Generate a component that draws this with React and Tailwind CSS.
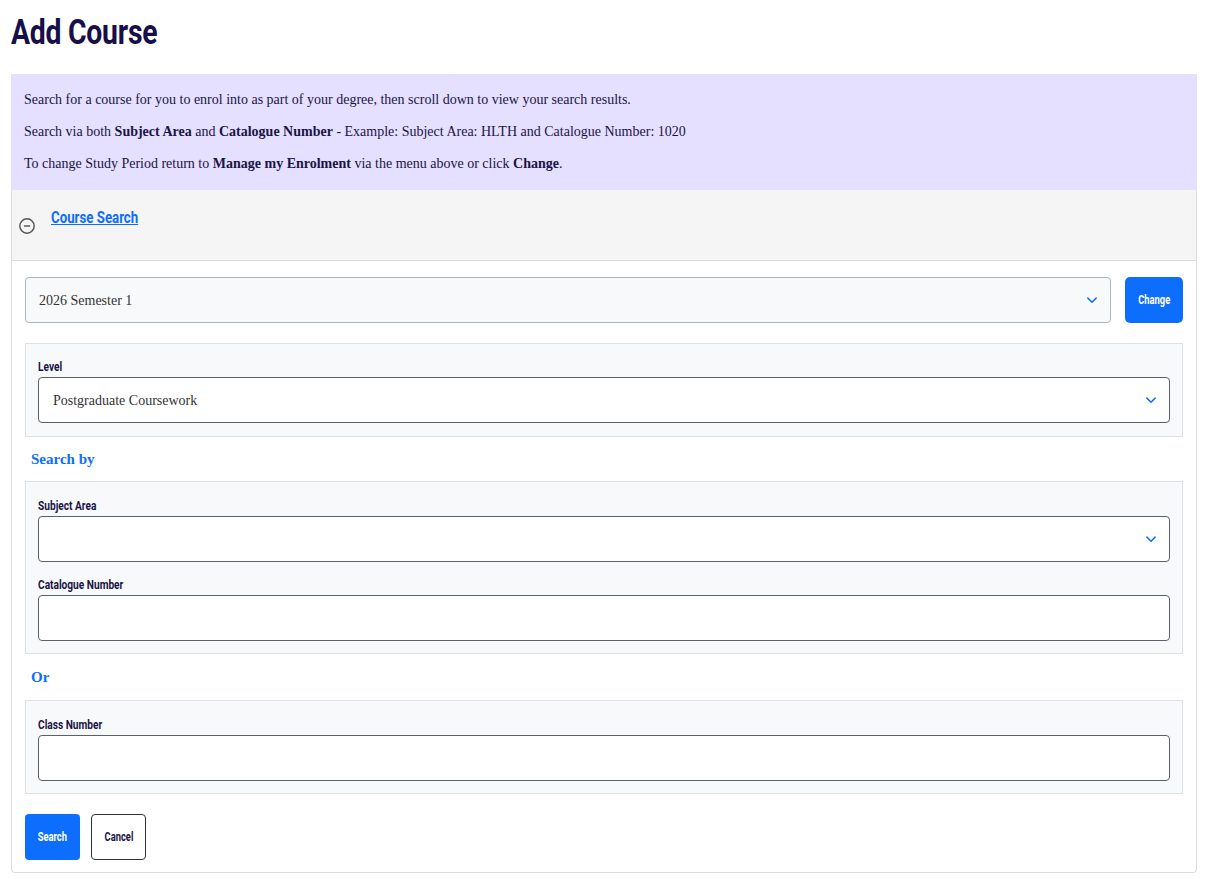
import React from "react";

function Chevron() {
  return (
    <svg width="12" height="12" viewBox="0 0 16 16" className="text-[#0d6efd]">
      <path d="M2.5 5.5l5.5 5.5 5.5-5.5" fill="none" stroke="currentColor" strokeWidth="2" strokeLinecap="round" strokeLinejoin="round" />
    </svg>
  );
}

function Label({ children }) {
  return (
    <div className="h-[12px] mb-[5px] leading-[12px]">
      <span className="inline-block origin-left scale-x-[0.78] font-['Roboto',sans-serif] text-[13px] font-bold text-[#1a1446]">
        {children}
      </span>
    </div>
  );
}

export default function App() {
  return (
    <div className="bg-white min-h-[879px] pl-[11px] pr-[10px] pt-[13px] pb-[6px] font-['Liberation_Serif',serif] text-[#1a1446]">
      <h1 className="h-[40px] leading-[40px]">
        <span className="inline-block origin-left scale-x-[0.81] font-['Roboto',sans-serif] text-[35px] font-bold text-[#160f4a] tracking-[-0.3px]">
          Add Course
        </span>
      </h1>
      <div className="mt-[21px] bg-[#e5e0ff] px-[13px] pt-[17px] pb-[17px] text-[14px] leading-[18px]">
        <p>Search for a course for you to enrol into as part of your degree, then scroll down to view your search results.</p>
        <p className="mt-[14px]">
          Search via both <b>Subject Area</b> and <b>Catalogue Number</b> - Example: Subject Area: HLTH and Catalogue Number: 1020
        </p>
        <p className="mt-[14px]">
          To change Study Period return to <b>Manage my Enrolment</b> via the menu above or click <b>Change</b>.
        </p>
      </div>
      <div className="border border-[#dddddd] border-t-0 rounded-b-[4px]">
        <div className="bg-[#f5f5f5] border-b border-[#dddddd] h-[71px] flex items-start pl-[6px]">
          <svg width="18" height="18" viewBox="0 0 20 20" className="mt-[27px] text-[#555]">
            <circle cx="10" cy="10" r="8" fill="none" stroke="currentColor" strokeWidth="1.6" />
            <path d="M6.5 10h7" stroke="currentColor" strokeWidth="1.6" />
          </svg>
          <a href="#" className="ml-[15px] mt-[17px] text-[#0d6efd] underline leading-[20px]">
            <span className="inline-block origin-left scale-x-[0.78] font-['Roboto',sans-serif] text-[17px] font-bold underline">
              Course Search
            </span>
          </a>
        </div>
        <div className="px-[13px] pt-[16px] pb-[12px]">
          <div className="flex gap-[14px]">
            <div className="flex-1 h-[46px] bg-[#f8f9fa] border border-[#adb5bd] rounded-[4px] flex items-center justify-between pl-[13px] pr-[12px] text-[14px] text-[#333]">
              <span>2026 Semester 1</span>
              <Chevron />
            </div>
            <button className="w-[58px] h-[46px] bg-[#0d6efd] rounded-[5px] flex items-center justify-center">
              <span className="inline-block scale-x-[0.72] font-['Roboto',sans-serif] text-[13px] font-bold text-white">Change</span>
            </button>
          </div>
          <div className="mt-[20px] bg-[#f8f9fa] border border-[#dee2e6] px-[12px] pt-[16px] pb-[13px]">
            <Label>Level</Label>
            <div className="h-[46px] bg-white border border-[#5a6169] rounded-[4px] flex items-center justify-between pl-[14px] pr-[12px] text-[14px] text-[#333]">
              <span>Postgraduate Coursework</span>
              <Chevron />
            </div>
          </div>
          <div className="mt-[13px] ml-[6px] text-[#0d6efd] font-bold text-[15px] leading-[18px]">Search by</div>
          <div className="mt-[13px] bg-[#f8f9fa] border border-[#dee2e6] px-[12px] pt-[17px] pb-[12px]">
            <Label>Subject Area</Label>
            <div className="h-[46px] bg-white border border-[#5a6169] rounded-[4px] flex items-center justify-end pr-[12px]">
              <Chevron />
            </div>
            <div className="mt-[16px]">
              <Label>Catalogue Number</Label>
            </div>
            <div className="h-[46px] bg-white border border-[#5a6169] rounded-[4px]" />
          </div>
          <div className="mt-[14px] ml-[6px] text-[#0d6efd] font-bold text-[15px] leading-[18px]">Or</div>
          <div className="mt-[14px] bg-[#f8f9fa] border border-[#dee2e6] px-[12px] pt-[17px] pb-[12px]">
            <Label>Class Number</Label>
            <div className="h-[46px] bg-white border border-[#5a6169] rounded-[4px]" />
          </div>
          <div className="mt-[20px] flex gap-[11px]">
            <button className="w-[55px] h-[46px] bg-[#0d6efd] rounded-[4px] flex items-center justify-center">
              <span className="inline-block scale-x-[0.72] font-['Roboto',sans-serif] text-[13px] font-bold text-white">Search</span>
            </button>
            <button className="w-[55px] h-[46px] bg-white border border-[#333] rounded-[4px] flex items-center justify-center">
              <span className="inline-block scale-x-[0.72] font-['Roboto',sans-serif] text-[13px] font-bold text-[#1a1446]">Cancel</span>
            </button>
          </div>
        </div>
      </div>
    </div>
  );
}
